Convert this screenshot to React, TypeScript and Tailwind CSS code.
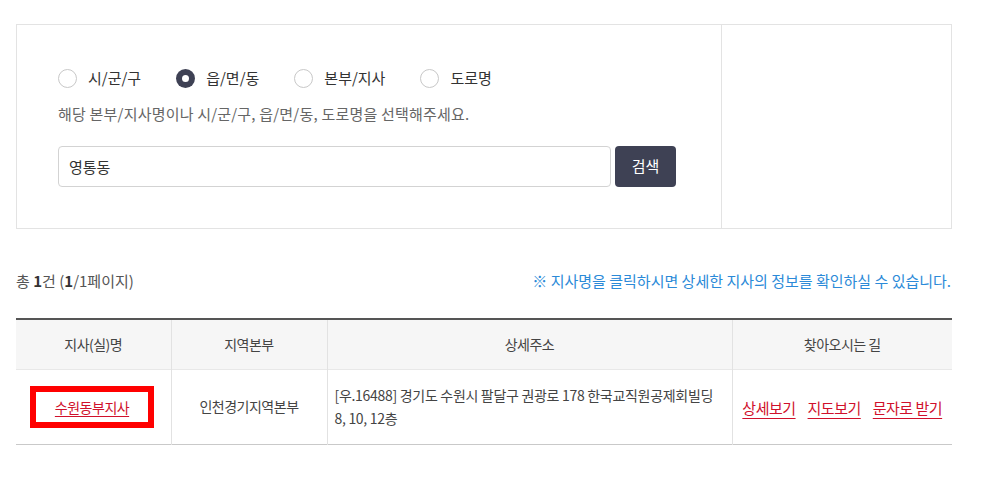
import { useState } from "react";

const options = ["시/군/구", "읍/면/동", "본부/지사", "도로명"];

const Radio = ({ label, checked, onClick }: { label: string; checked: boolean; onClick: () => void }) => (
  <button type="button" onClick={onClick} className="flex items-center gap-[11px] mr-[35px]">
    {checked ? (
      <span className="w-[19px] h-[19px] rounded-full bg-[#3e4154] flex items-center justify-center">
        <span className="w-[7px] h-[7px] rounded-full bg-white"></span>
      </span>
    ) : (
      <span className="w-[19px] h-[19px] rounded-full border border-[#c8c8c8] bg-white"></span>
    )}
    <span className="text-[15px] text-[#333]">{label}</span>
  </button>
);

export default function App() {
  const [selected, setSelected] = useState(1);

  return (
    <div className="w-[986px] h-[477px] bg-white pl-4 pt-6 font-['Noto_Sans_CJK_KR','Noto_Sans',sans-serif]">
      <div className="w-[936px]">
        {/* search box */}
        <div className="flex h-[205px] border border-[#e3e3e3]">
          <div className="w-[705px] border-r border-[#e3e3e3] pl-[41px] pt-[42px]">
            <div className="flex items-center h-[22px]">
              {options.map((o, i) => (
                <Radio key={o} label={o} checked={selected === i} onClick={() => setSelected(i)} />
              ))}
            </div>
            <p className="mt-[15px] text-[15px] text-[#666] leading-[20px] tracking-[0.2px]">
              해당 본부/지사명이나 시/군/구, 읍/면/동, 도로명을 선택해주세요.
            </p>
            <div className="flex mt-[22px] gap-[4px]">
              <input
                defaultValue="영통동"
                className="w-[553px] h-[41px] border border-[#d3d3d3] rounded-[4px] px-[10px] text-[15px] text-[#333] outline-none"
              />
              <button className="w-[61px] h-[41px] rounded-[4px] bg-[#3e4154] text-white text-[15px]">검색</button>
            </div>
          </div>
          <div className="flex-1"></div>
        </div>

        {/* result summary */}
        <div className="flex justify-between items-center mt-[42px] h-[20px] text-[15px]">
          <p className="text-[#555]">
            총 <b className="text-[#333] font-bold">1</b>건 (<b className="text-[#333] font-bold">1</b>/1페이지)
          </p>
          <p className="text-[#2b8ad8] pr-[1px]">※ 지사명을 클릭하시면 상세한 지사의 정보를 확인하실 수 있습니다.</p>
        </div>

        {/* table */}
        <table className="w-full mt-[27px] border-t-2 border-[#555] border-collapse text-[14px] text-[#444] tracking-[-0.5px]">
          <thead>
            <tr className="bg-[#f6f6f6] h-[50px]">
              <th className="w-[155px] font-normal border-r border-[#e2e2e2]">지사(실)명</th>
              <th className="w-[156px] font-normal border-r border-[#e2e2e2]">지역본부</th>
              <th className="w-[405px] font-normal border-r border-[#e2e2e2]">상세주소</th>
              <th className="font-normal">찾아오시는 길</th>
            </tr>
          </thead>
          <tbody>
            <tr className="h-[75px] border-t border-[#e8e8e8] border-b border-b-[#c9c9c9]">
              <td className="border-r border-[#e2e2e2] pl-[14px] pt-[1px]">
                <span className="inline-flex items-center justify-center w-[124px] h-[42px] border-[6px] border-[#ff0000]">
                  <a href="#" className="text-[#d0102b] underline underline-offset-[3px]">수원동부지사</a>
                </span>
              </td>
              <td className="text-center border-r border-[#e2e2e2]">인천경기지역본부</td>
              <td className="border-r border-[#e2e2e2] pl-[7px] pr-[16px] leading-[23px] tracking-[-0.3px] break-keep">
                [우.16488] 경기도 수원시 팔달구 권광로 178 한국교직원공제회빌딩 8, 10, 12층
              </td>
              <td className="text-center">
                <div className="flex justify-center gap-[12px] text-[15px] pt-[4px]">
                  <a href="#" className="text-[#d0102b] underline underline-offset-[4px]">상세보기</a>
                  <a href="#" className="text-[#d0102b] underline underline-offset-[4px]">지도보기</a>
                  <a href="#" className="text-[#d0102b] underline underline-offset-[4px]">문자로 받기</a>
                </div>
              </td>
            </tr>
          </tbody>
        </table>
      </div>
    </div>
  );
}
